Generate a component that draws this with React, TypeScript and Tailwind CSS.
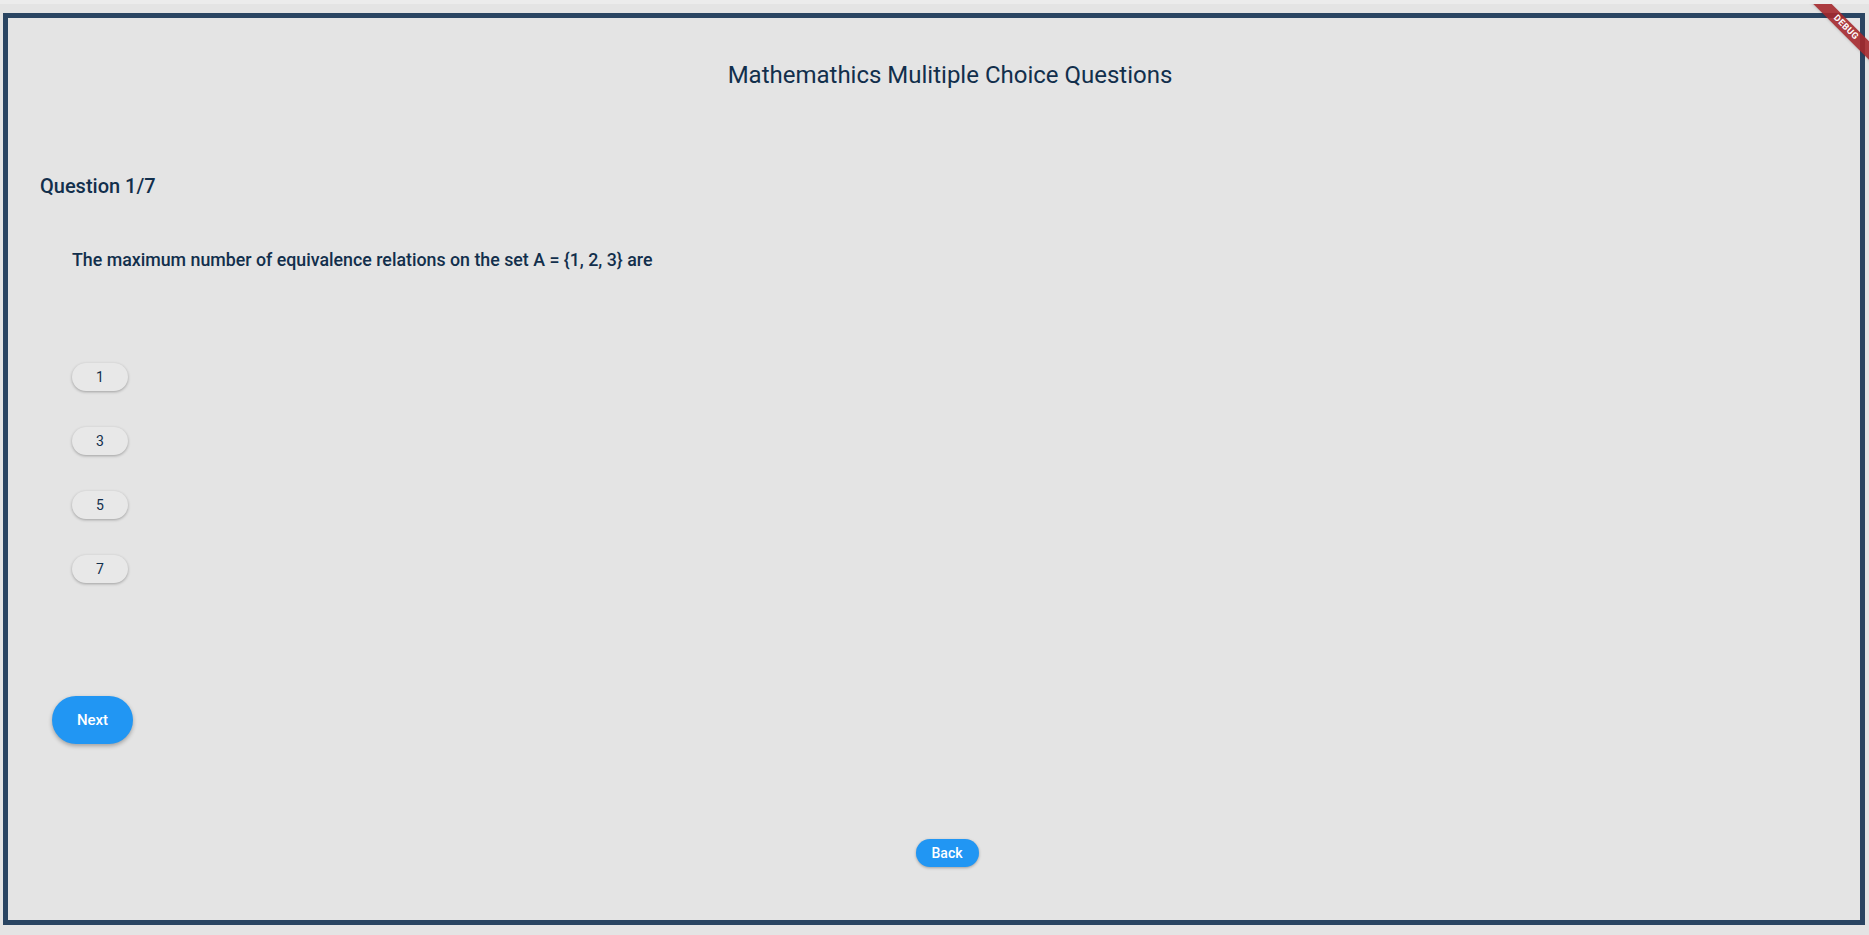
import { useState } from "react";

const options = ["1", "3", "5", "7"];

const DebugBanner = () => (
  <div className="absolute top-0 right-0 w-[60px] h-[60px] overflow-hidden pointer-events-none">
    <div className="absolute left-[-13px] top-[17px] w-[100px] h-[13px] rotate-45 bg-[#a4282c]/90 flex items-center justify-center shadow-sm">
      <span className="text-[9px] font-bold tracking-[0.5px] text-white leading-none">DEBUG</span>
    </div>
  </div>
);

const App = () => {
  const [selected, setSelected] = useState<string | null>(null);

  return (
    <div
      className="relative min-h-screen bg-[#e4e4e4] border-t-4 border-[#ececec] pt-[9px] pl-[3px] pr-[4px] pb-[10px]"
      style={{ fontFamily: "Roboto, 'Noto Sans', sans-serif" }}
    >
      <div className="h-[912px] border-[5px] border-[#2a4562] flex flex-col text-[#122f4c]">
        {/* Title */}
        <div className="pt-[43px] pl-[32px] flex justify-center">
          <h1 className="text-[24px] leading-[28px] font-normal">
            Mathemathics Mulitiple Choice Questions
          </h1>
        </div>

        {/* Question counter */}
        <div className="pt-[85px] pl-[32px]">
          <h2 className="text-[20px] leading-[24px] font-medium">Question 1/7</h2>
        </div>

        {/* Question */}
        <div className="pt-[51px] pl-[64px]">
          <p className="text-[17.8px] leading-[22px] font-medium">
            The maximum number of equivalence relations on the set A = {"{1, 2, 3}"} are
          </p>
        </div>

        {/* Options */}
        <div className="pt-[92px] pl-[64px] flex flex-col gap-[36px]">
          {options.map((opt) => (
            <button
              key={opt}
              onClick={() => setSelected(opt)}
              className={`w-[56px] h-[28px] rounded-full text-[14px] shadow-[0_1px_3px_rgba(0,0,0,0.3)] flex items-center justify-center ${
                selected === opt ? "bg-[#d7e9f8]" : "bg-[#e8e8e8]"
              }`}
            >
              {opt}
            </button>
          ))}
        </div>

        {/* Next */}
        <div className="pt-[113px] pl-[44px]">
          <button className="w-[81px] h-[48px] rounded-full bg-[#2196f3] text-white text-[15px] font-medium shadow-[0_2px_4px_rgba(0,0,0,0.3)]">
            Next
          </button>
        </div>

        {/* Back */}
        <div className="pt-[95px] pl-[26px] flex justify-center">
          <button className="w-[63px] h-[28px] rounded-full bg-[#2196f3] text-white text-[14px] font-medium shadow-[0_1px_3px_rgba(0,0,0,0.3)]">
            Back
          </button>
        </div>
      </div>
      <DebugBanner />
    </div>
  );
};

export default App;
